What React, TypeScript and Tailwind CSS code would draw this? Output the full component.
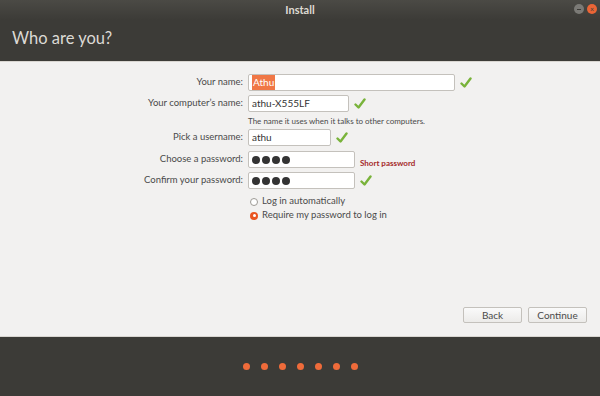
import React from 'react';

const Check = () => (
  <svg width="12" height="12" viewBox="0 0 12 12" className="shrink-0">
    <path d="M1.5 6.5 L4.5 9.5 L10.5 1.5" fill="none" stroke="#79b33a" strokeWidth="2.4" strokeLinecap="round" strokeLinejoin="round" />
  </svg>
);

const Dots = ({ n }: { n: number }) => (
  <span className="flex items-center gap-[2px]">
    {Array.from({ length: n }).map((_, i) => (
      <span key={i} className="block h-[8px] w-[8px] rounded-full bg-[#333]" />
    ))}
  </span>
);

const Field = ({
  label,
  width,
  children,
  after,
}: {
  label: string;
  width: number;
  children: React.ReactNode;
  after?: React.ReactNode;
}) => (
  <div className="flex h-[17px] items-center">
    <span className="w-[244px] pr-[1px] text-right text-[9.5px] text-[#4a4a4a]">{label}</span>
    <div
      className="ml-[4px] flex h-[17px] items-center rounded-[2px] border border-[#c4c1bc] bg-white px-[3px] text-[10px] text-[#333]"
      style={{ width }}
    >
      {children}
    </div>
    <div className="ml-[5px]">{after}</div>
  </div>
);

export default function App() {
  return (
    <div
      className="flex h-[396px] w-[600px] flex-col bg-[#f2f1f0]"
      style={{ fontFamily: 'Lato, "Noto Sans", sans-serif' }}
    >
      {/* header */}
      <div className="flex h-[62px] flex-col border-b border-[#d9d6d1] bg-[#3c3b37]">
        <div className="relative flex h-[20px] items-center justify-center bg-gradient-to-b from-[#4b4a45] to-[#3c3b37]">
          <span className="text-[11px] font-bold text-[#dfdbd2]">Install</span>
          <div className="absolute right-[3px] top-[4px] flex gap-[3px]">
            <span className="flex h-[10px] w-[10px] items-center justify-center rounded-full bg-[#7b7a76]">
              <span className="block h-[1px] w-[4px] bg-[#3c3b37]" />
            </span>
            <span className="flex h-[10px] w-[10px] items-center justify-center rounded-full bg-[#eb6536] text-[7px] leading-none text-[#3c3b37]">
              ×
            </span>
          </div>
        </div>
        <div className="flex flex-1 items-center pl-[12px] pb-[4px]">
          <h1 className="text-[16.5px] leading-none text-[#dcdad5]">Who are you?</h1>
        </div>
      </div>

      {/* content */}
      <div className="flex flex-1 flex-col justify-between pt-[12px] pb-[13px] pr-[13px]">
        <div className="flex flex-col">
          <Field label="Your name:" width={207} after={<Check />}>
            <span className="bg-[#f07746] px-[1px] text-white">Athu</span>
          </Field>
          <div className="mt-[4px]">
            <Field label="Your computer’s name:" width={101} after={<Check />}>
              athu-X555LF
            </Field>
          </div>
          <div className="ml-[248px] mt-[2px] h-[14px] text-[8px] leading-[14px] text-[#4a4a4a]">
            The name it uses when it talks to other computers.
          </div>
          <div className="mt-[1px]">
            <Field label="Pick a username:" width={83} after={<Check />}>
              athu
            </Field>
          </div>
          <div className="mt-[5px]">
            <Field
              label="Choose a password:"
              width={107}
              after={<span className="text-[8px] font-bold text-[#a52a2a]">Short password</span>}
            >
              <Dots n={4} />
            </Field>
          </div>
          <div className="mt-[4px]">
            <Field label="Confirm your password:" width={107} after={<Check />}>
              <Dots n={4} />
            </Field>
          </div>
          <div className="ml-[250px] mt-[6px] flex flex-col gap-[1px] text-[9.5px] text-[#4a4a4a]">
            <label className="flex h-[13px] items-center gap-[4px]">
              <span className="block h-[8px] w-[8px] rounded-full border border-[#9d9a95] bg-white" />
              Log in automatically
            </label>
            <label className="flex h-[13px] items-center gap-[4px]">
              <span className="flex h-[8px] w-[8px] items-center justify-center rounded-full bg-[#e95420]">
                <span className="block h-[3px] w-[3px] rounded-full bg-white" />
              </span>
              Require my password to log in
            </label>
          </div>
        </div>
        <div className="flex justify-end gap-[6px]">
          <button className="h-[16px] w-[59px] rounded-[2px] border border-[#c4c1bc] bg-gradient-to-b from-[#fafafa] to-[#ecebe9] text-[10px] leading-none text-[#4a4a4a]">
            Back
          </button>
          <button className="h-[16px] w-[59px] rounded-[2px] border border-[#c4c1bc] bg-gradient-to-b from-[#fafafa] to-[#ecebe9] text-[10px] leading-none text-[#4a4a4a]">
            Continue
          </button>
        </div>
      </div>

      {/* footer */}
      <div className="flex h-[60px] items-center justify-center gap-[11px] border-t border-[#d9d6d1] bg-[#3c3b37] pb-[1px]">
        {Array.from({ length: 7 }).map((_, i) => (
          <span key={i} className="block h-[7px] w-[7px] rounded-full bg-[#ef6b3a]" />
        ))}
      </div>
    </div>
  );
}
